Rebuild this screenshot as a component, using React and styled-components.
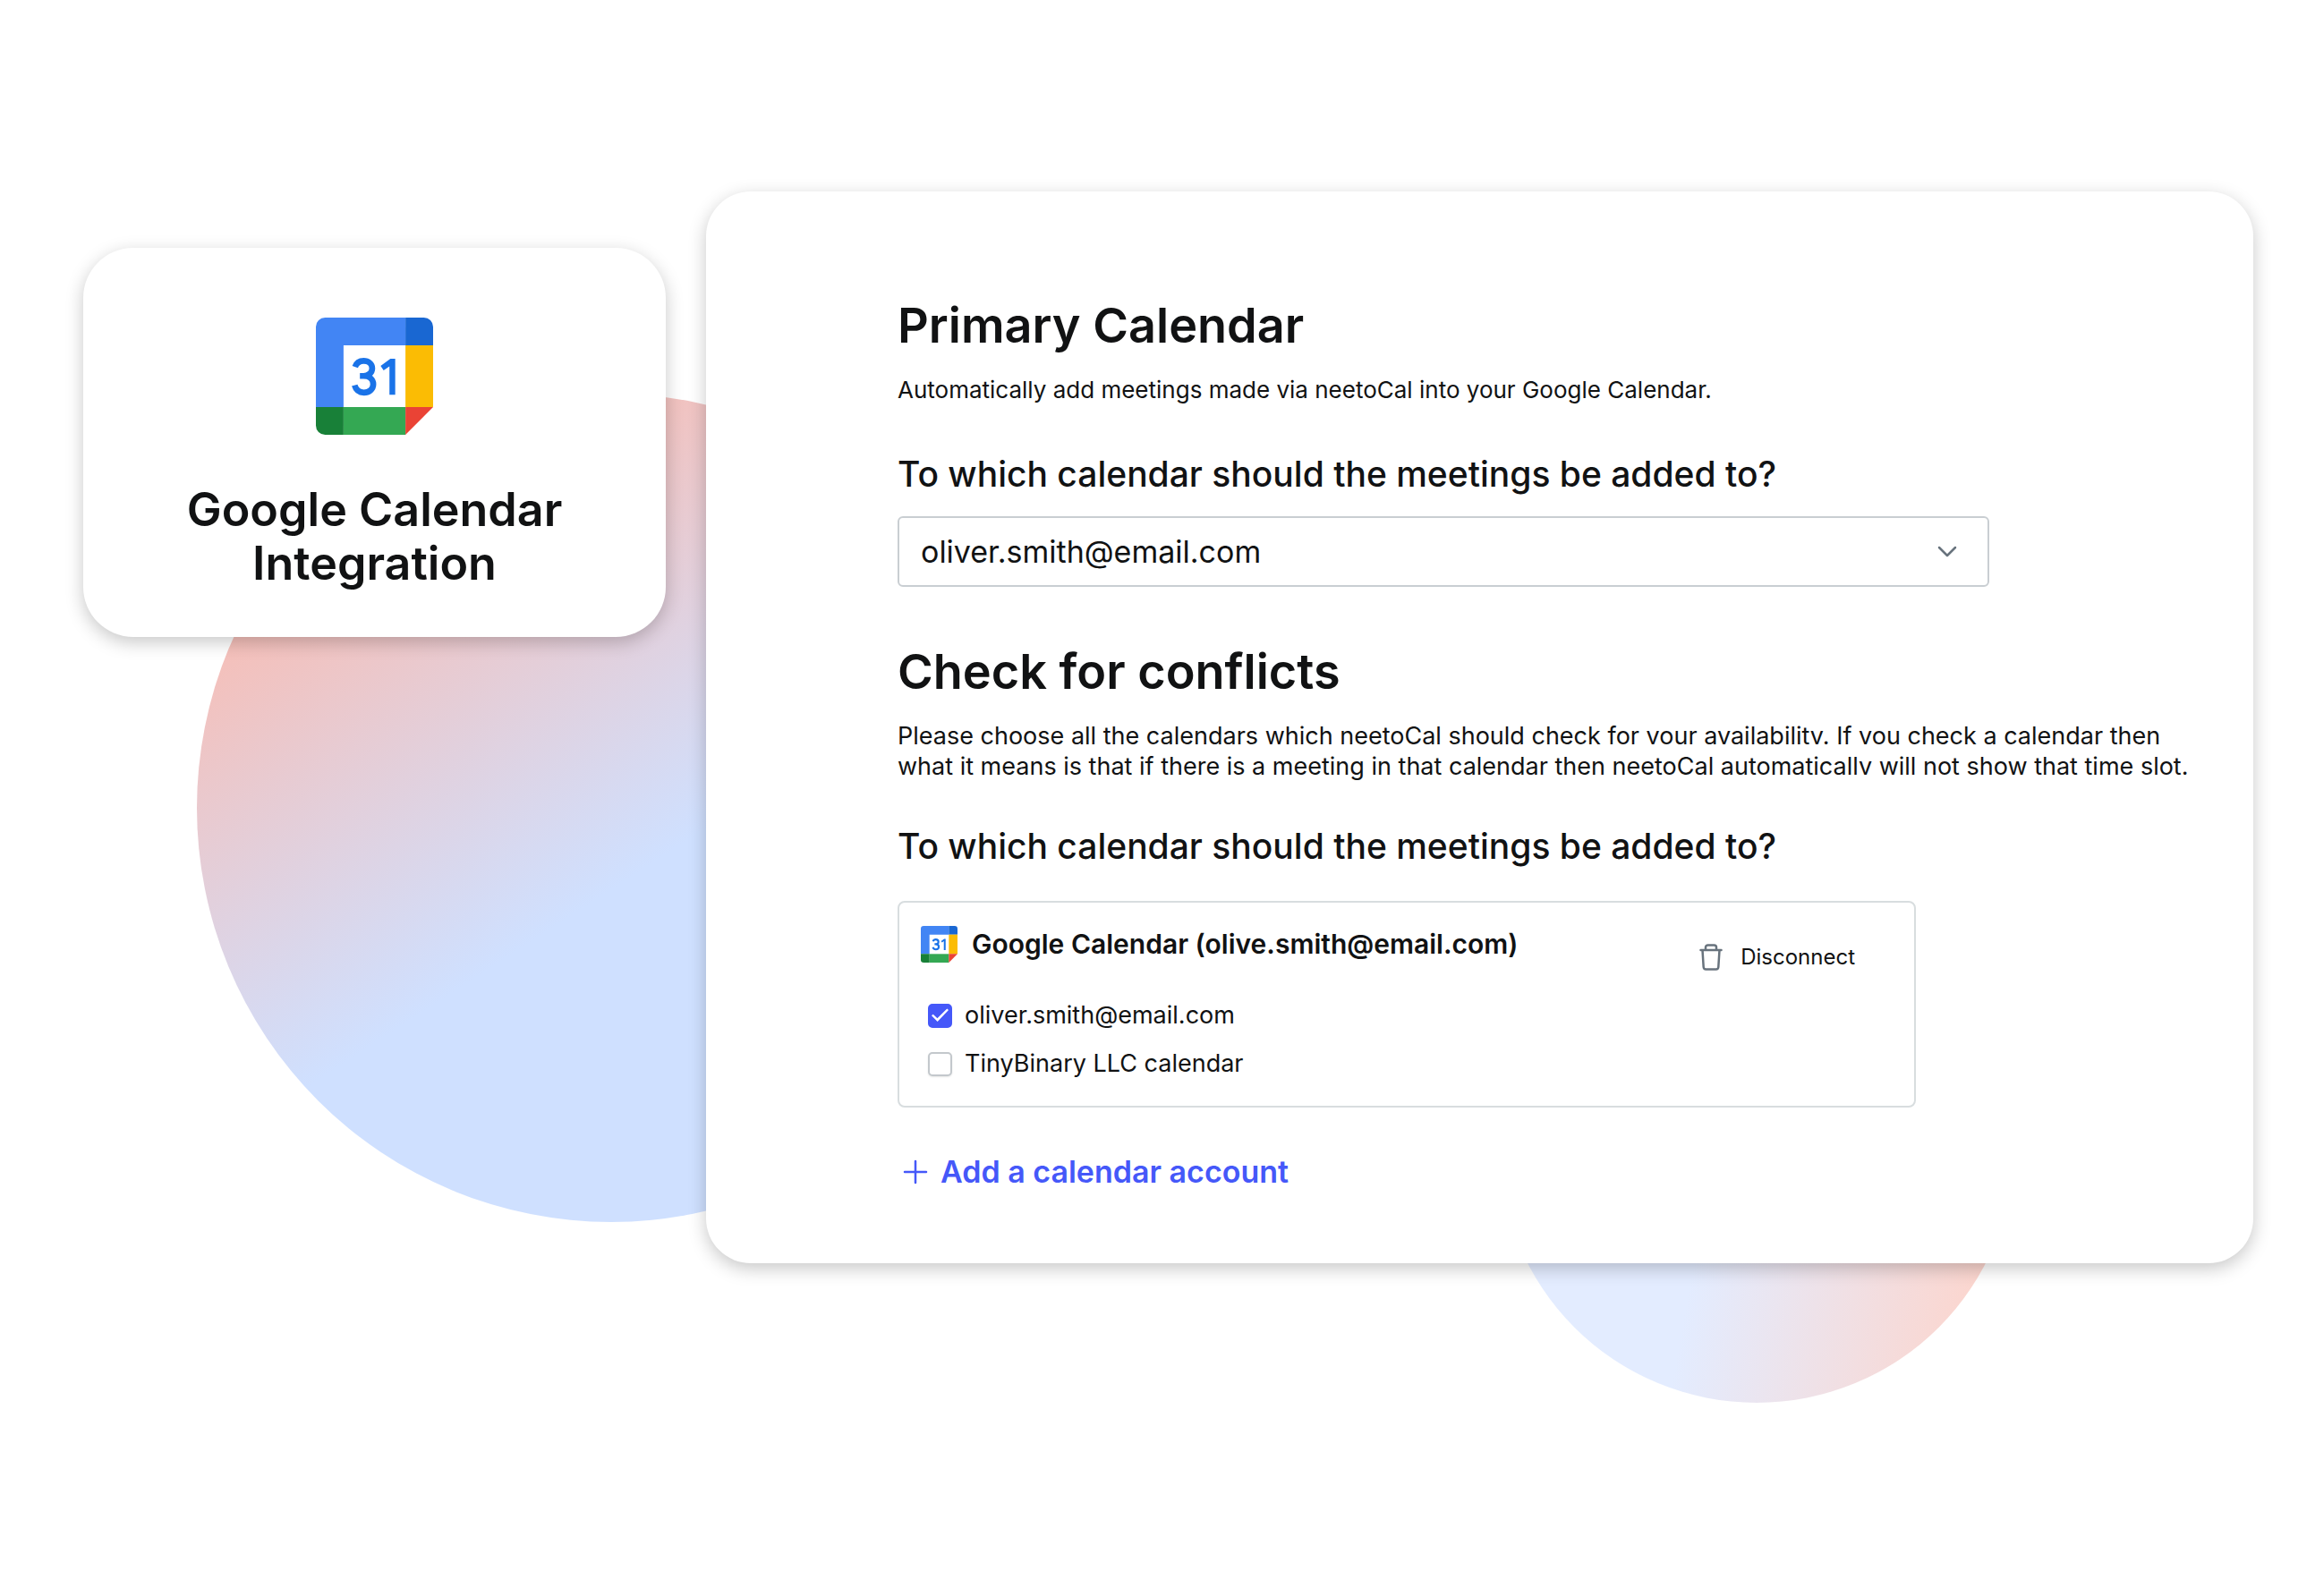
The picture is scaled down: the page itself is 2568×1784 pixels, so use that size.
import React from "react";
import styled, { createGlobalStyle } from "styled-components";

const Global = createGlobalStyle`
  *, *::before, *::after { box-sizing: border-box; }
  body { margin: 0; background: #fff; color: #111213; font-family: Inter, "Liberation Sans", sans-serif; }
  h1, h2, h3, p, fieldset { margin: 0; padding: 0; border: 0; }
  button, select, input { font: inherit; color: inherit; }
`;

const Scene = styled.main`
  position: relative;
  display: grid;
  grid-template-columns: 651fr 1729fr;
  column-gap: 45px;
  align-items: start;
  min-height: 100vh;
  padding: 214px 50px 120px 93px;
  overflow: hidden;
`;

const Disc = styled.div`
  position: absolute;
  left: ${(p) => p.$x}px;
  top: ${(p) => p.$y}px;
  width: ${(p) => p.$size}px;
  height: ${(p) => p.$size}px;
  border-radius: 50%;
  background: ${(p) => p.$fill};
`;

const Card = styled.section`
  position: relative;
  background: #fff;
  box-shadow: 0 6px 20px rgba(0, 0, 0, 0.22);
`;

const IntroCard = styled(Card)`
  display: flex;
  flex-direction: column;
  align-items: center;
  gap: 54px;
  margin-top: 63px;
  padding: 78px 60px 52px;
  border-radius: 56px;
`;

const IntroTitle = styled.h1`
  font-size: 52px;
  line-height: 60px;
  font-weight: 600;
  text-align: center;
`;

const Panel = styled(Card)`
  display: flex;
  flex-direction: column;
  align-items: flex-start;
  padding: 118px 60px 82px 214px;
  border-radius: 50px;
`;

const Title = styled.h2`
  font-size: 54px;
  line-height: 64px;
  font-weight: 600;
`;

const Text = styled.p`
  margin-top: 23px;
  font-size: ${(p) => p.$size}px;
  line-height: 34px;
  white-space: pre-line;
`;

const Question = styled.label`
  display: block;
  margin: ${(p) => p.$margin};
  font-size: 39px;
  line-height: 50px;
  font-weight: 500;
`;

const SelectWrap = styled.div`
  position: relative;
  width: 1220px;
  max-width: 100%;
  margin-bottom: 63px;

  svg {
    position: absolute;
    right: 36px;
    top: 50%;
    margin-top: -7px;
    pointer-events: none;
  }
`;

const Select = styled.select`
  display: block;
  width: 100%;
  height: 79px;
  padding: 0 24px;
  appearance: none;
  background: #fff;
  border: 2px solid #c9ced2;
  border-radius: 6px;
  font-size: 34px;
`;

const Account = styled.fieldset`
  display: flex;
  justify-content: space-between;
  align-items: flex-start;
  width: 1138px;
  max-width: 100%;
  && {
    padding: 25px 66px 27px 24px;
    border: 2px solid #d8dddf;
    border-radius: 8px;
  }
`;

const AccountName = styled.h3`
  display: flex;
  align-items: center;
  gap: 16px;
  font-size: 30px;
  line-height: 42px;
  font-weight: 600;
`;

const Options = styled.div`
  display: flex;
  flex-direction: column;
  gap: 14px;
  margin: 39px 0 0 8px;
`;

const Option = styled.label`
  display: flex;
  align-items: center;
  gap: 14px;
  font-size: 27px;
  line-height: 40px;
`;

const Box = styled.input`
  appearance: none;
  display: grid;
  place-items: center;
  flex: none;
  width: 27px;
  height: 27px;
  margin: 0;
  border: 2px solid #c3c8cc;
  border-radius: 5px;
  background: #fff;
  box-shadow: 0 1px 2px rgba(0, 0, 0, 0.1);

  &:checked {
    border-color: #4558f9;
    background: #4558f9;
    box-shadow: none;
  }
  &:checked::before {
    content: "";
    width: 19px;
    height: 16px;
    background: #fff;
    clip-path: polygon(0 51%, 9% 42%, 34% 70%, 91% 3%, 100% 13%, 35% 94%);
  }
`;

const IconButton = styled.button`
  display: flex;
  align-items: center;
  gap: ${(p) => p.$gap}px;
  margin: ${(p) => p.$margin};
  padding: 0;
  border: 0;
  background: none;
  color: ${(p) => p.$color};
  font-size: ${(p) => p.$size}px;
  line-height: 40px;
  font-weight: ${(p) => p.$weight};
`;

function CalendarLogo({ size }) {
  return (
    <svg width={size} height={size} viewBox="0 0 152.64 152.64" aria-hidden="true">
      <path fill="#fff" d="M36 36h81v81H36z" />
      <path fill="#4285f4" d="M12 0h104.64v36H36v80.64H0V12A12 12 0 0 1 12 0z" />
      <path fill="#1967d2" d="M116.64 0h24a12 12 0 0 1 12 12v24h-36z" />
      <path fill="#fbbc04" d="M116.64 36h36v80.64h-36z" />
      <path fill="#34a853" d="M36 116.64h80.64v36H36z" />
      <path fill="#188038" d="M0 116.64h36v36H12a12 12 0 0 1-12-12z" />
      <path fill="#ea4335" d="M116.64 116.64h36l-36 36z" />
      <path
        fill="none"
        stroke="#1a73e8"
        strokeWidth="7.8"
        d="M51 64.3C53 58.5 57.2 56.4 62.2 56.4C68.5 56.4 73.3 60.3 73.3 66C73.3 72 68 76 62 76H57.3M62 76C69.5 76 74.7 80.5 74.7 86.8C74.7 93.5 69 97.7 62.5 97.7C56.5 97.7 52.2 94.5 50.4 88.2"
      />
      <path fill="#1a73e8" d="M95.8 100.4V63.4L88.2 68.8L84.3 62.9L97 53.7H103.3V100.4z" />
    </svg>
  );
}

const Chevron = () => (
  <svg width="22" height="14" viewBox="0 0 22 14" fill="none" stroke="#68737d" strokeWidth="2.5" strokeLinecap="round" strokeLinejoin="round" aria-hidden="true">
    <path d="M2 2l9 9 9-9" />
  </svg>
);

const Trash = () => (
  <svg width="26" height="30" viewBox="0 0 26 30" fill="none" stroke="#68737d" strokeWidth="2.5" strokeLinecap="round" strokeLinejoin="round" aria-hidden="true">
    <path d="M1.5 7h23M7 7V4a2.5 2.5 0 0 1 2.5-2.5h7A2.5 2.5 0 0 1 19 4v3M3.5 7l1.2 19a2.7 2.7 0 0 0 2.7 2.5h11.2a2.7 2.7 0 0 0 2.7-2.5l1.2-19" />
  </svg>
);

const Plus = () => (
  <svg width="28" height="28" viewBox="0 0 28 28" stroke="currentColor" strokeWidth="2.5" strokeLinecap="round" aria-hidden="true">
    <path d="M14 2v24M2 14h24" />
  </svg>
);

export default function App() {
  return (
    <>
      <Global />
      <Scene>
        <Disc $x={220} $y={440} $size={926} $fill="linear-gradient(147deg, #ffb7a7 10%, #cfe0ff 56%)" />
        <Disc $x={1675} $y={992} $size={576} $fill="linear-gradient(280deg, #fcd5cd 8%, #e3ecff 57%)" />
        <IntroCard>
          <CalendarLogo size={131} />
          <IntroTitle>
            Google Calendar
            <br />
            Integration
          </IntroTitle>
        </IntroCard>
        <Panel>
          <Title>Primary Calendar</Title>
          <Text $size={26}>Automatically add meetings made via neetoCal into your Google Calendar.</Text>
          <Question htmlFor="target" $margin="52px 0 22px">
            To which calendar should the meetings be added to?
          </Question>
          <SelectWrap>
            <Select id="target">
              <option>oliver.smith@email.com</option>
            </Select>
            <Chevron />
          </SelectWrap>
          <Title>Check for conflicts</Title>
          <Text $size={27}>
            {"Please choose all the calendars which neetoCal should check for vour availabilitv. If vou check a calendar then\nwhat it means is that if there is a meeting in that calendar then neetoCal automaticallv will not show that time slot."}
          </Text>
          <Question as="p" id="conflicts" $margin="47px 0 36px">
            To which calendar should the meetings be added to?
          </Question>
          <Account aria-labelledby="conflicts">
            <div>
              <AccountName>
                <CalendarLogo size={41} />
                Google Calendar (olive.smith@email.com)
              </AccountName>
              <Options>
                <Option>
                  <Box type="checkbox" defaultChecked />
                  oliver.smith@email.com
                </Option>
                <Option>
                  <Box type="checkbox" />
                  TinyBinary LLC calendar
                </Option>
              </Options>
            </div>
            <IconButton type="button" $gap={20} $size={24} $weight={400} $color="#111213" $margin="16px 0 0">
              <Trash />
              Disconnect
            </IconButton>
          </Account>
          <IconButton type="button" $gap={14} $size={34} $weight={600} $color="#4558f9" $margin="52px 0 0 6px">
            <Plus />
            Add a calendar account
          </IconButton>
        </Panel>
      </Scene>
    </>
  );
}
